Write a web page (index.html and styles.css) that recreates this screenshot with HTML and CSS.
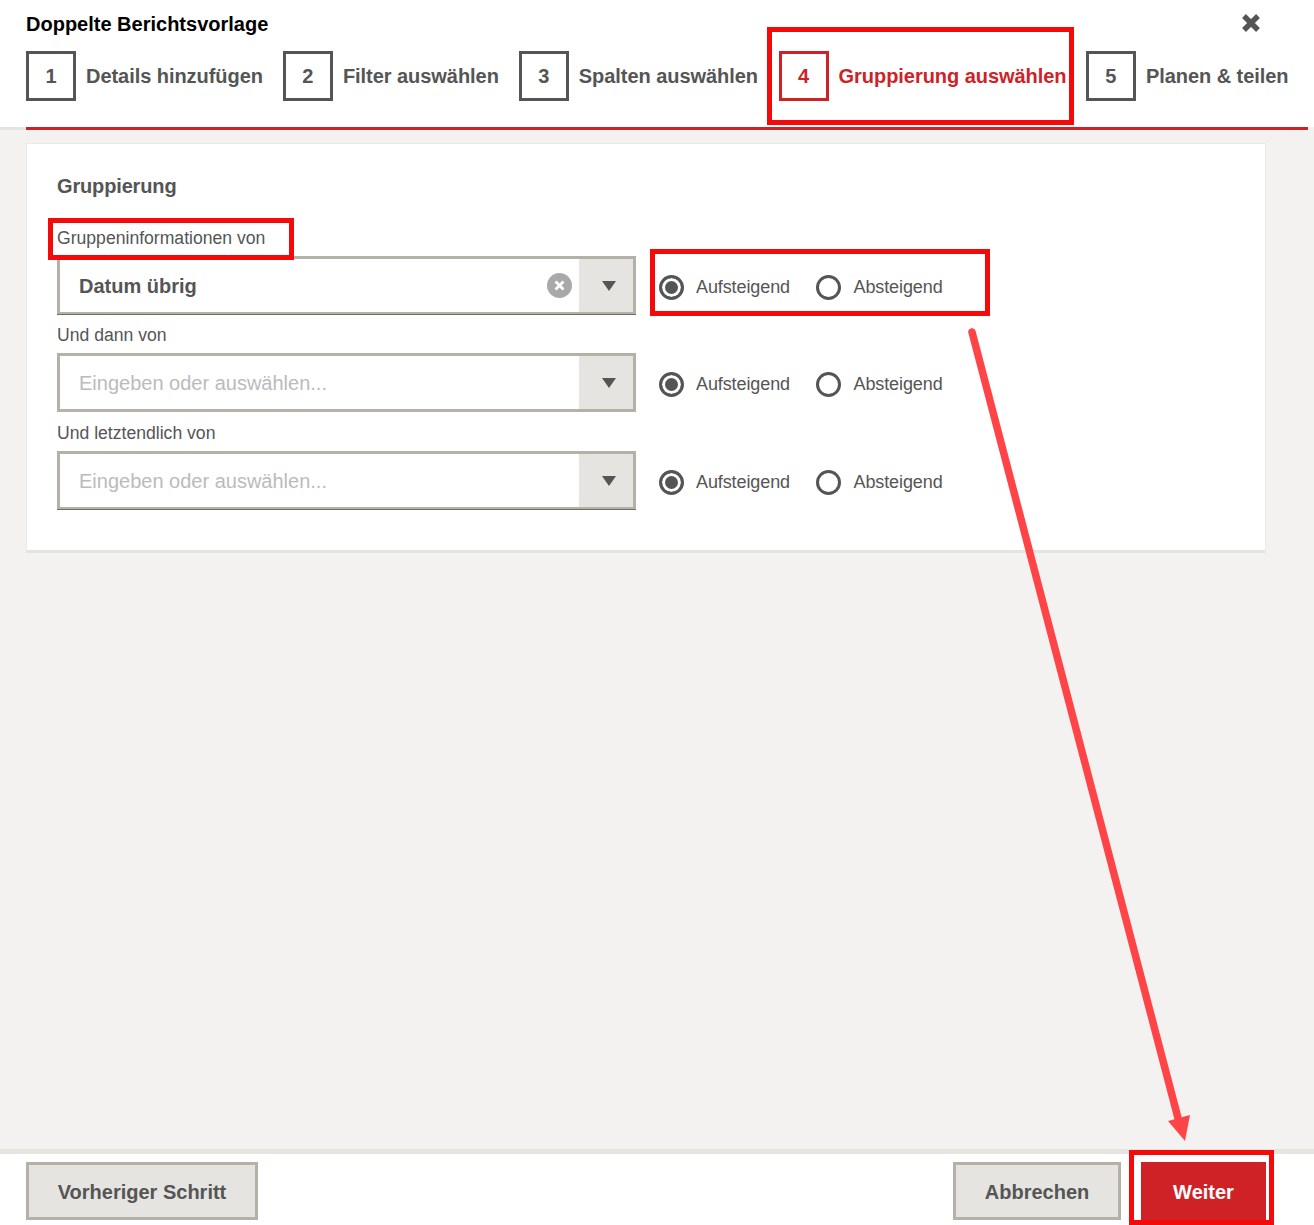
FILE: index.html
```html
<!DOCTYPE html>
<html lang="de">
<head>
<meta charset="utf-8">
<title>Doppelte Berichtsvorlage</title>
<link rel="stylesheet" href="styles.css">
</head>
<body>
<div class="dialog">
  <header class="header">
    <div class="title-row">
      <h1 class="title">Doppelte Berichtsvorlage</h1>
      <svg class="close" width="20" height="20" viewBox="0 0 20 20"><path d="M3 3L17 17M17 3L3 17" stroke="#555" stroke-width="5.4" fill="none"/></svg>
    </div>
    <ol class="steps">
      <li class="step"><span class="step-num">1</span><span class="step-label">Details hinzufügen</span></li>
      <li class="step"><span class="step-num">2</span><span class="step-label">Filter auswählen</span></li>
      <li class="step"><span class="step-num">3</span><span class="step-label">Spalten auswählen</span></li>
      <li class="step step-active"><span class="step-num">4</span><span class="step-label">Gruppierung auswählen</span></li>
      <li class="step"><span class="step-num">5</span><span class="step-label">Planen &amp; teilen</span></li>
    </ol>
  </header>
  <div class="rule-row"><div class="rule-gap"></div><div class="rule"></div></div>
  <main class="content">
    <section class="card">
      <h2 class="card-title">Gruppierung</h2>
      <div class="group">
        <label class="field-label">Gruppeninformationen von</label>
        <div class="field-row">
          <div class="select select-dark">
            <span class="select-value">Datum übrig</span>
            <svg class="clear" width="25" height="25" viewBox="0 0 25 25"><circle cx="12.5" cy="12.5" r="12.5" fill="#a9a9a9"/><path d="M8.5 8.5L16.5 16.5M16.5 8.5L8.5 16.5" stroke="#fff" stroke-width="2.8"/></svg>
            <span class="select-btn"><svg width="14" height="10" viewBox="0 0 14 10"><path d="M0 0H14L7 10Z" fill="#555"/></svg></span>
          </div>
          <div class="radios">
            <span class="radio-item"><span class="radio radio-on"></span><span class="radio-label">Aufsteigend</span></span>
            <span class="radio-item"><span class="radio"></span><span class="radio-label">Absteigend</span></span>
          </div>
        </div>
      </div>
      <div class="group group-mid">
        <label class="field-label">Und dann von</label>
        <div class="field-row">
          <div class="select">
            <span class="select-placeholder">Eingeben oder auswählen...</span>
            <span class="select-btn"><svg width="14" height="10" viewBox="0 0 14 10"><path d="M0 0H14L7 10Z" fill="#555"/></svg></span>
          </div>
          <div class="radios">
            <span class="radio-item"><span class="radio radio-on"></span><span class="radio-label">Aufsteigend</span></span>
            <span class="radio-item"><span class="radio"></span><span class="radio-label">Absteigend</span></span>
          </div>
        </div>
      </div>
      <div class="group">
        <label class="field-label">Und letztendlich von</label>
        <div class="field-row">
          <div class="select select-dark">
            <span class="select-placeholder">Eingeben oder auswählen...</span>
            <span class="select-btn"><svg width="14" height="10" viewBox="0 0 14 10"><path d="M0 0H14L7 10Z" fill="#555"/></svg></span>
          </div>
          <div class="radios">
            <span class="radio-item"><span class="radio radio-on"></span><span class="radio-label">Aufsteigend</span></span>
            <span class="radio-item"><span class="radio"></span><span class="radio-label">Absteigend</span></span>
          </div>
        </div>
      </div>
    </section>
  </main>
  <footer class="footer">
    <button class="btn">Vorheriger Schritt</button>
    <div class="footer-right">
      <button class="btn btn-cancel">Abbrechen</button>
      <button class="btn btn-primary">Weiter</button>
    </div>
  </footer>
</div>
<div class="mark mark-step"></div>
<div class="mark mark-label"></div>
<div class="mark mark-radios"></div>
<div class="mark mark-next"></div>
<svg class="arrow" width="1314" height="1225" viewBox="0 0 1314 1225">
  <path d="M972 332L1178 1118" stroke="#ff4447" stroke-width="7.5" stroke-linecap="round" fill="none"/>
  <path d="M1168 1121L1190 1115L1185 1141Z" fill="#ff4447"/>
</svg>
</body>
</html>
```
FILE: styles.css
```css
* { box-sizing: border-box; }
html, body { margin: 0; padding: 0; height: 1225px; overflow: hidden; }
body { font-family: "Liberation Sans", Arial, sans-serif; color: #555; background: #fff; position: relative; }
.dialog { display: flex; flex-direction: column; height: 1225px; }

.header { height: 127px; padding: 0 0 0 26px; flex: none; }
.title-row { display: flex; justify-content: space-between; height: 51px; padding-right: 53px; }
.title { margin: 12px 0 0; font-size: 20px; line-height: 24px; font-weight: 700; color: #000; }
.close { margin-top: 13px; }
.steps { display: flex; gap: 20px; list-style: none; margin: 0; padding: 0; }
.step { display: flex; align-items: center; gap: 10px; }
.step-num { width: 50px; height: 50px; border: 3px solid #555; display: flex; align-items: center; justify-content: center; font-size: 20px; font-weight: 700; color: #555; }
.step-label { font-size: 20px; font-weight: 700; color: #555; white-space: nowrap; letter-spacing: -0.05px; }
.step-active { margin: 0 -0.6px 0 0.6px; }
.step-active .step-num { border-color: #cf2227; color: #cf2227; }
.step-active .step-label { color: #cf2227; }

.rule-row { display: flex; flex: none; height: 3px; background: #f3f2f0; }
.rule-gap { width: 26px; background: #e5e4e0; }
.rule { width: 1282px; background: #cf2227; }

.content { flex: 1; background: #f3f2f0; padding: 13px 48px 0 26px; min-height: 0; }
.card { height: 410px; background: #fff; border: 1px solid #eae9e6; border-bottom: 3px solid #e5e4e0; padding: 0 30px; }
.card-title { margin: 0; padding-top: 29px; height: 73.5px; font-size: 20px; line-height: 26px; font-weight: 700; color: #555; letter-spacing: -0.15px; }
.group { height: 97px; }
.group-mid { height: 98px; }
.field-label { display: block; height: 38.5px; font-size: 17.6px; line-height: 41px; color: #555; }
.field-row { display: flex; align-items: center; gap: 22.5px; }

.select { width: 579px; height: 59px; border: 3px solid #b5b1a7; display: flex; align-items: center; padding-left: 19px; background: #fff; }
.select-dark { height: 58px; margin-bottom: 1px; border-bottom-width: 2px; box-shadow: 0 1px 0 #6f6d67; }
.select-value { flex: 1; font-size: 20px; font-weight: 700; color: #555; padding-top: 2px; }
.select-placeholder { flex: 1; font-size: 20px; color: #bbb; padding-top: 2px; }
.clear { margin-right: 7.5px; margin-top: -1px; }
.select-btn { width: 54px; align-self: stretch; padding-left: 5px; background: #e5e4e0; display: flex; align-items: center; justify-content: center; }

.radios { display: flex; gap: 26px; margin-top: 3px; }
.radio-item { display: flex; align-items: center; gap: 12.5px; }
.radio { width: 25px; height: 25px; border: 3px solid #555; border-radius: 50%; background: #fff; flex: none; }
.radio-on { background: #555; box-shadow: inset 0 0 0 3px #fff; }
.radio-label { font-size: 18px; color: #555; letter-spacing: -0.1px; }

.footer { flex: none; height: 76px; border-top: 5px solid #e5e4e0; background: #fff; padding: 8px 48px 0 26px; display: flex; justify-content: space-between; align-items: flex-start; }
.footer-right { display: flex; gap: 20px; }
.btn { height: 58px; width: 232px; font-family: "Liberation Sans", Arial, sans-serif; font-size: 20px; font-weight: 700; color: #555; background: #e5e4e0; border: 3px solid #b5b1a7; padding: 2px 0 0; }
.btn-cancel { width: 168px; }
.btn-primary { width: 125px; background: #cf2227; border-color: #cf2227; color: #fff; }

.mark { position: absolute; border: 5px solid #f50a0a; pointer-events: none; }
.mark-step { left: 767px; top: 27px; width: 307px; height: 98px; }
.mark-label { left: 48px; top: 218px; width: 246px; height: 42px; }
.mark-radios { left: 650px; top: 249px; width: 340px; height: 67px; }
.mark-next { left: 1129px; top: 1150px; width: 145px; height: 75px; }
.arrow { position: absolute; left: 0; top: 0; pointer-events: none; }
```
